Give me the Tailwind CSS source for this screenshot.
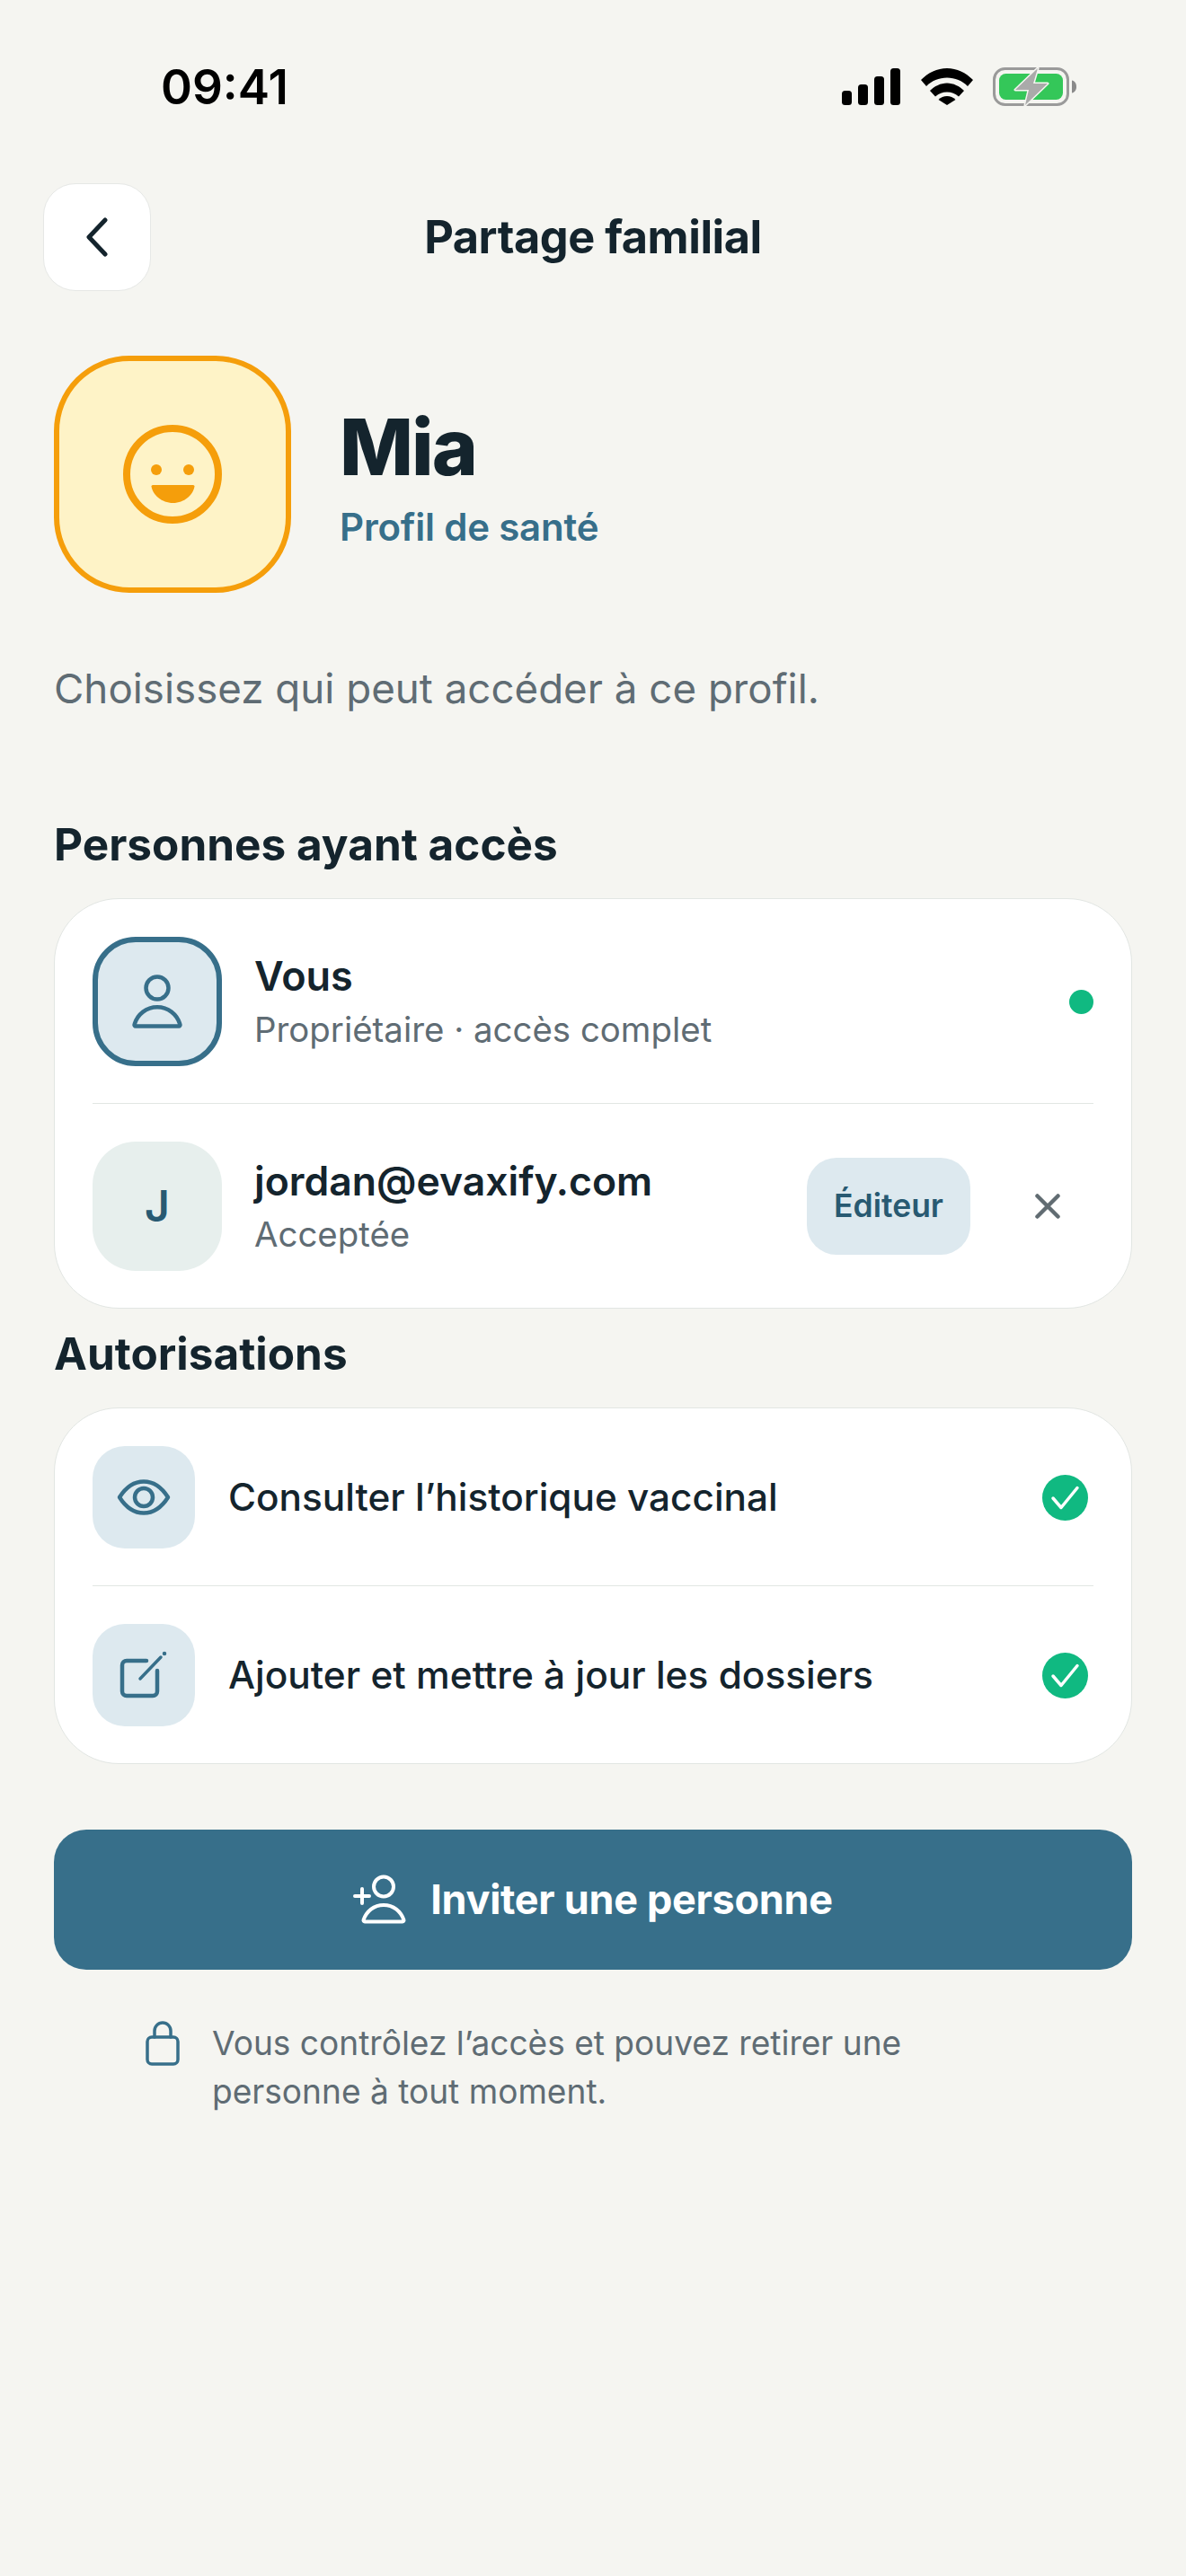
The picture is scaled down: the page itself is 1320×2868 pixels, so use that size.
<!DOCTYPE html>
<html lang="fr">
<head>
  <meta charset="UTF-8">
  <title>Partage familial</title>
  <script src="https://cdn.jsdelivr.net/npm/@tailwindcss/browser@4"></script>
</head>
<body class="bg-[#f5f5f1] font-[Inter,sans-serif] text-[#14242d]">
<div class="w-[1320px] h-[2868px] overflow-hidden">

  <!-- Status bar -->
  <div class="h-[128px] pt-[66px] flex items-start justify-between pl-[179px] pr-[122px]">
    <span class="text-[53px] leading-[62px] font-semibold text-black">09:41</span>
    <div class="flex items-start gap-[23px] pt-[10px]">
      <svg width="65" height="41" viewBox="0 0 65 41" fill="#000">
        <rect x="0" y="25" width="11" height="16" rx="3.5"/>
        <rect x="18" y="18" width="11" height="23" rx="3.5"/>
        <rect x="36" y="9" width="11" height="32" rx="3.5"/>
        <rect x="54" y="0" width="11" height="41" rx="3.5"/>
      </svg>
      <svg width="58" height="41" viewBox="0 0 58 41" fill="#000">
        <path d="M0 13C8 5 18 0 29 0S50 5 58 13L52 20C46 14 38 10.5 29 10.5S12 14 6 20Z"/>
        <path d="M10 25C15 20 22 16.5 29 16.5S43 20 48 25L42 31.5C38 28 34 26.5 29 26.5S20 28 16 31.5Z"/>
        <path d="M19.5 35C22 32.5 25.5 31 29 31S36 32.5 38.5 35L29 41Z"/>
      </svg>
      <svg class="-ml-[1px] -mt-[1px]" width="93" height="43" viewBox="0 0 93 43">
        <rect x="1.5" y="1.5" width="82" height="40" rx="12" fill="none" stroke="#9a9a9a" stroke-width="3"/>
        <rect x="7" y="7" width="71" height="29" rx="7.5" fill="#34c759"/>
        <path d="M88 14.5c3 .5 5 3 5 7s-2 6.500-5 7z" fill="#8a8a8a"/>
        <path d="M50 1 25 25H40L36 42 61 18H45Z" fill="#aaaaaa" stroke="#f5f5f1" stroke-width="3" stroke-linejoin="round" paint-order="stroke"/>
      </svg>
    </div>
  </div>

  <!-- Header -->
  <div class="mt-[76px] px-[48px] grid grid-cols-[120px_1fr_120px] items-center">
    <button class="w-[120px] h-[120px] rounded-[36px] bg-white border border-[#e6e8e6] flex items-center justify-center">
      <svg width="26" height="44" viewBox="0 0 26 44" fill="none" stroke="#14242d" stroke-width="5" stroke-linecap="round" stroke-linejoin="round">
        <path d="M22 3 4 22 22 41"/>
      </svg>
    </button>
    <h1 class="text-center text-[50.500px] leading-[60px] font-bold tracking-[-0.5px]">Partage familial</h1>
    <div></div>
  </div>

  <main class="px-[60px]">
    <!-- Profile -->
    <div class="mt-[72px] flex items-center gap-[54px]">
      <div class="w-[264px] h-[264px] rounded-[84px] bg-[#fef3c7] border-[6px] border-[#f59e0b] flex items-center justify-center">
        <svg width="110" height="110" viewBox="0 0 110 110">
          <circle cx="55" cy="55" r="51" fill="none" stroke="#f59e0b" stroke-width="8"/>
          <ellipse cx="37" cy="50" rx="6" ry="6" fill="#f59e0b"/>
          <ellipse cx="73" cy="50" rx="6" ry="6" fill="#f59e0b"/>
          <path d="M33 67H78a1.500 1.500 0 0 1 1.500 1.500C78 78 68 87 55.500 87S33 78 31.500 68.500A1.500 1.500 0 0 1 33 67Z" fill="#f59e0b"/>
        </svg>
      </div>
      <div class="pt-[7px]">
        <h2 class="text-[87px] leading-[96px] font-extrabold tracking-[-2px]">Mia</h2>
        <p class="mt-[15px] text-[42px] leading-[52px] font-semibold tracking-[-0.2px] text-[#376f8a]">Profil de santé</p>
      </div>
    </div>

    <p class="mt-[77px] text-[45.700px] leading-[60px] text-[#5f6c74]">Choisissez qui peut accéder à ce profil.</p>

    <!-- People -->
    <h3 class="mt-[113px] text-[49.500px] leading-[60px] font-bold">Personnes ayant accès</h3>
    <section class="mt-[30px] bg-white rounded-[72px] border border-[#e2e6e3]">
      <div class="px-[42px] pt-[42px] pb-[41px] flex items-center">
        <div class="w-[144px] h-[144px] shrink-0 rounded-[48px] bg-[#dde9ef] border-[6px] border-[#376f8a] flex items-center justify-center">
          <svg width="72" height="72" viewBox="0 0 72 72" fill="none" stroke="#376f8a" stroke-width="4.500">
            <circle cx="36" cy="21" r="12.500"/>
            <path d="M12 63.500H60a1.500 1.500 0 0 0 1.400-2C58 50 48 42.300 36 42.300S14 50 10.600 61.500a1.500 1.500 0 0 0 1.400 2Z" stroke-linejoin="round"/>
          </svg>
        </div>
        <div class="ml-[36px] flex-1">
          <div class="text-[45px] leading-[56px] font-semibold">Vous</div>
          <div class="mt-[6px] text-[38.400px] leading-[50px] text-[#5f6c74]">Propriétaire · accès complet</div>
        </div>
        <span class="w-[27px] h-[27px] rounded-full bg-[#10b981]"></span>
      </div>
      <div class="mx-[42px] h-px bg-[#e2e6e3]"></div>
      <div class="px-[42px] pt-[42px] pb-[41px] flex items-center">
        <div class="w-[144px] h-[144px] shrink-0 rounded-[48px] bg-[#e7efed] flex items-center justify-center text-[48px] font-semibold text-[#285a72]">J</div>
        <div class="ml-[36px] flex-1">
          <div class="text-[44.500px] leading-[56px] font-semibold">jordan@evaxify.com</div>
          <div class="mt-[6px] text-[38.400px] leading-[50px] text-[#5f6c74]">Acceptée</div>
        </div>
        <span class="w-[182px] h-[108px] rounded-[33px] bg-[#dde9ef] flex items-center justify-center text-[35.500px] font-semibold text-[#285a72]">Éditeur</span>
        <svg class="ml-[72px] mr-[37px]" width="28" height="28" viewBox="0 0 28 28" fill="none" stroke="#616c72" stroke-width="4.500" stroke-linecap="round">
          <path d="M2.500 2.500 25.500 25.500M25.500 2.500 2.500 25.500"/>
        </svg>
      </div>
    </section>

    <!-- Permissions -->
    <h3 class="mt-[20px] text-[49.500px] leading-[60px] font-bold">Autorisations</h3>
    <section class="mt-[30px] bg-white rounded-[72px] border border-[#e2e6e3]">
      <div class="px-[42px] pt-[42px] pb-[41px] flex items-center">
        <div class="w-[114px] h-[114px] shrink-0 rounded-[36px] bg-[#dde9ef] flex items-center justify-center">
          <svg width="60" height="40" viewBox="0 0 60 40" fill="none" stroke="#376f8a" stroke-width="4.500" stroke-linejoin="round">
            <path d="M3 20C10 9 19 2.500 30 2.500S50 9 57 20C50 31 41 37.500 30 37.500S10 31 3 20Z"/>
            <circle cx="30" cy="20" r="10"/>
          </svg>
        </div>
        <div class="ml-[37px] flex-1 text-[42.300px] leading-[56px] font-medium">Consulter l’historique vaccinal</div>
        <svg class="mr-[6px]" width="51" height="51" viewBox="0 0 51 51">
          <circle cx="25.500" cy="25.500" r="25.500" fill="#10b981"/>
          <path d="M12 26 21 36.500 39 14.500" fill="none" stroke="#fff" stroke-width="3.500" stroke-linecap="round" stroke-linejoin="round"/>
        </svg>
      </div>
      <div class="mx-[42px] h-px bg-[#e2e6e3]"></div>
      <div class="px-[42px] pt-[42px] pb-[41px] flex items-center">
        <div class="w-[114px] h-[114px] shrink-0 rounded-[36px] bg-[#dde9ef] flex items-center justify-center">
          <svg width="56" height="56" viewBox="0 0 56 56" fill="none" stroke="#376f8a" stroke-linecap="round" stroke-linejoin="round">
            <path d="M31 12H9a5 5 0 0 0-5 5V46a5 5 0 0 0 5 5H38a5 5 0 0 0 5-5V23" stroke-width="4.500"/>
            <path d="M24 32 47 8" stroke-width="3.500"/>
            <circle cx="51" cy="4" r="1.500" fill="#376f8a" stroke-width="1.500"/>
          </svg>
        </div>
        <div class="ml-[37px] flex-1 text-[42.400px] leading-[56px] font-medium">Ajouter et mettre à jour les dossiers</div>
        <svg class="mr-[6px]" width="51" height="51" viewBox="0 0 51 51">
          <circle cx="25.500" cy="25.500" r="25.500" fill="#10b981"/>
          <path d="M12 26 21 36.500 39 14.500" fill="none" stroke="#fff" stroke-width="3.500" stroke-linecap="round" stroke-linejoin="round"/>
        </svg>
      </div>
    </section>

    <!-- Invite -->
    <button class="mt-[73px] w-full h-[156px] rounded-[36px] bg-[#376f8a] text-white flex items-center justify-center gap-[26px]">
      <svg width="60" height="56" viewBox="0 0 60 56" fill="none" stroke="#fff" stroke-width="4" stroke-linecap="round" stroke-linejoin="round">
        <path d="M2 24H18M10 16V32"/>
        <circle cx="34" cy="13.500" r="11"/>
        <path d="M13 52.500H55a1.500 1.500 0 0 0 1.400-2C53 41 45 34 34 34S15 41 11.600 50.500a1.500 1.500 0 0 0 1.400 2Z"/>
      </svg>
      <span class="text-[45px] leading-[56px] font-bold tracking-[-0.3px]">Inviter une personne</span>
    </button>

    <!-- Footer note -->
    <div class="mt-[55px] pl-[102px] flex items-start gap-[36px]">
      <svg class="mt-[2px] shrink-0" width="38" height="50" viewBox="0 0 38 50" fill="none" stroke="#376f8a" stroke-width="3.500" stroke-linecap="round" stroke-linejoin="round">
        <rect x="2" y="18" width="34" height="30" rx="5"/>
        <path d="M10 18V11a9 9 0 0 1 18 0V18"/>
      </svg>
      <p class="text-[37.100px] leading-[53.500px] text-[#5f6c74] w-[800px]">Vous contrôlez l’accès et pouvez retirer une<br>personne à tout moment.</p>
    </div>
  </main>
</div>
</body>
</html>
